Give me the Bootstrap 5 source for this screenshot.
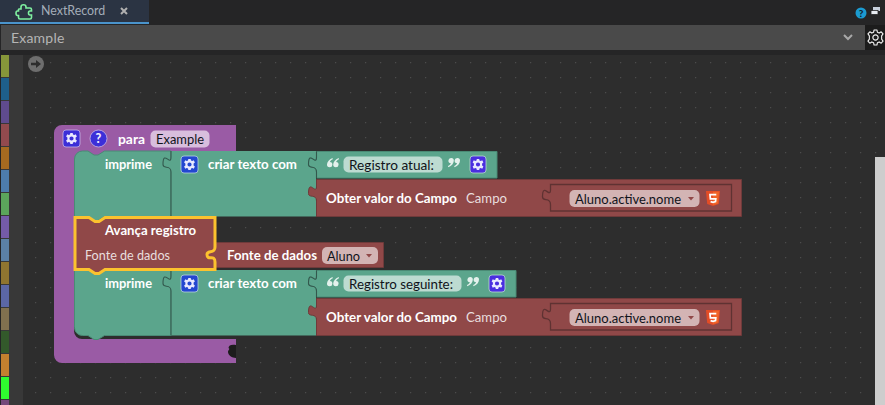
<!DOCTYPE html>
<html lang="pt">
<head>
<meta charset="utf-8">
<title>NextRecord</title>
<link href="https://cdn.jsdelivr.net/npm/bootstrap@5.3.0/dist/css/bootstrap.min.css" rel="stylesheet">
<style>
html,body{height:100%;overflow:hidden;background:#252526;font-family:"Lato","Noto Sans",sans-serif}
.shell{width:885px;height:405px}
.tabbar{height:25px;background:#252526}
.tabitem{width:149px;height:24px;background:#2b3443;border-bottom:2px solid #4a94cc;color:#a4adb8;font-size:12.4px;padding-left:15px}
.tabname{margin-left:8px;width:79px}
.selbar{height:25px;padding-left:1px}
.selfield{background:#4a4a4a;color:#b5b5b5;font-size:14px;padding:0 12px 0 10px;letter-spacing:.2px}
.selgear{width:20px;background:#1c1c1c}
.gapbar{height:5px;background:#252526}
.work{height:350px}
.swatches{width:23px;background:#383838;padding-left:1px;background-clip:content-box}
.swatchitem{width:8px;height:22px;margin-bottom:1px}
.stage{background:#2d2d2d}
.stage svg{display:block}
.thumb{position:absolute;right:0;top:102px;bottom:0;width:10px;background:#cdcdcd}
.bt{font:700 13.5px "Lato",sans-serif;fill:#fff}
.lt{font:400 13.5px "Lato",sans-serif;fill:#e8dede}
.ct{font:400 13.5px "Lato",sans-serif;fill:#10131a}
</style>
</head>
<body>
<div class="shell d-flex flex-column">
  <div class="tabbar d-flex justify-content-between">
    <div class="tabitem d-flex align-items-center">
      <svg width="18" height="17" viewBox="0 0 18 17"><path d="M4 6 H6 V4 C6 1 11 1 11 4 V5 H15 C16 5 16.500 5.500 16.500 6.500 V8 H15 C13 8 13 12 15 12 H16.500 V14.500 C16.500 15.500 16 16 15 16 H5 C4 16 3.500 15.500 3.500 14.500 V12.500 H2.500 C.5 12.500 .5 8 2.500 8 H3.500 V6.500 Z" fill="none" stroke="#7ff0a0" stroke-width="1.600"/></svg>
      <span class="tabname">NextRecord</span>
      <svg width="8" height="8" viewBox="0 0 8 8"><path d="M1 1 L7 7 M7 1 L1 7" stroke="#b0b0b0" stroke-width="2"/></svg>
    </div>
    <div class="d-flex align-items-start">
      <svg width="30" height="20" viewBox="855 0 30 20">
        <circle cx="861" cy="13" r="5.500" fill="#1b9bd1"/>
        <text x="861" y="16.500" text-anchor="middle" font-family="Lato,sans-serif" font-weight="900" font-size="10" fill="#10232e">?</text>
        <rect x="873" y="7" width="7" height="4" fill="#c8d0dc"/>
        <rect x="871" y="10.500" width="7" height="4" fill="#e8ecf2" stroke="#252526" stroke-width=".8"/>
      </svg>
    </div>
  </div>
  <div class="selbar d-flex">
    <div class="selfield flex-grow-1 d-flex align-items-center justify-content-between">
      <span>Example</span>
      <svg width="10" height="7" viewBox="0 0 10 7"><path d="M1 1 L5 5 L9 1" fill="none" stroke="#a8a8a8" stroke-width="2"/></svg>
    </div>
    <div class="selgear d-flex align-items-center justify-content-center">
      <svg width="17" height="17" viewBox="-9 -9 18 18"><path d="M-1.500 -8 H1.500 L2 -5.600 L3.900 -4.700 L6 -6 L8 -3.800 L6.500 -1.800 L6.500 1.800 L8 3.800 L6 6 L3.900 4.700 L2 5.600 L1.500 8 H-1.500 L-2 5.600 L-3.900 4.700 L-6 6 L-8 3.800 L-6.500 1.800 L-6.500 -1.800 L-8 -3.800 L-6 -6 L-3.900 -4.700 L-2 -5.600 Z" fill="none" stroke="#f2f2f2" stroke-width="1.200" stroke-linejoin="round"/><circle r="2.800" fill="none" stroke="#f2f2f2" stroke-width="1.200"/></svg>
    </div>
  </div>
  <div class="gapbar"></div>
  <div class="work d-flex position-relative">
    <div class="swatches flex-shrink-0">
      <div class="swatchitem" style="background:#87973a"></div>
      <div class="swatchitem" style="background:#1e5f8a"></div>
      <div class="swatchitem" style="background:#5f4b8e"></div>
      <div class="swatchitem" style="background:#924a4e"></div>
      <div class="swatchitem" style="background:#a56a20"></div>
      <div class="swatchitem" style="background:#4d7cac"></div>
      <div class="swatchitem" style="background:#5ba55b"></div>
      <div class="swatchitem" style="background:#745ba8"></div>
      <div class="swatchitem" style="background:#5b80a5"></div>
      <div class="swatchitem" style="background:#8f7530"></div>
      <div class="swatchitem" style="background:#5b67a5"></div>
      <div class="swatchitem" style="background:#80704f"></div>
      <div class="swatchitem" style="background:#33592b"></div>
      <div class="swatchitem" style="background:#c4802f"></div>
      <div class="swatchitem" style="background:#2ffb2f"></div>
      <div class="swatchitem" style="background:#74487a"></div>
    </div>
    <div class="stage flex-grow-1 position-relative overflow-hidden">
      <svg width="862" height="350" viewBox="23 55 862 350">
        <defs>
          <pattern id="dots" x="35" y="62" width="15" height="15" patternUnits="userSpaceOnUse"><rect width="1.200" height="1.200" fill="#4c4c4c"/></pattern>
          <g id="gearb"><path d="M-1.200 -5.500 H1.200 L1.500 -4 L2.800 -3.400 L4.200 -4.200 L5.400 -2.100 L4.100 -1.100 V1.100 L5.400 2.100 L4.200 4.200 L2.800 3.400 L1.500 4 L1.200 5.500 H-1.200 L-1.500 4 L-2.800 3.400 L-4.200 4.200 L-5.400 2.100 L-4.100 1.100 V-1.100 L-5.400 -2.100 L-4.200 -4.200 L-2.800 -3.400 L-1.500 -4 Z M0 -2.100 A2.100 2.100 0 1 0 0 2.100 A2.100 2.100 0 1 0 0 -2.100 Z" fill="#e9e9ff" fill-rule="evenodd"/></g>
          <g id="h5"><path d="M0 0 H14 L12.800 13 L7 15 L1.200 13 Z" fill="#e44d26"/><path d="M7 0.800 H13 L12 12.400 L7 14 Z" fill="#f16529"/><path d="M10.300 3.600 H4 L4.400 7.900 H9.800 L9.500 10.600 L7 11.400 L4.600 10.600" fill="none" stroke="#fff" stroke-width="1.700"/></g>
          <path id="q1" d="M5.500 0 C2 1.500 0 4 0 6.500 A2.700 2.700 0 1 0 2.900 3.900 C3.200 2.800 4.300 1.800 5.800 1.200 Z" fill="#e3f1ec"/>
          <g id="lq"><use href="#q1"/><use href="#q1" x="6.200"/></g>
          <g id="rq"><use href="#q1" transform="rotate(180 2.900 4.600) translate(-6.200 0)"/><use href="#q1" transform="rotate(180 2.900 4.600)"/></g>
        </defs>
        <rect x="23" y="55" width="862" height="350" fill="url(#dots)"/>

        <!-- run arrow -->
        <circle cx="36" cy="64" r="8" fill="#6e6e6e"/>
        <path d="M31 62.700 H36 V60 L41 64 L36 68 V65.300 H31 Z" fill="#2d2d2d"/>

        <!-- purple wrapper -->
        <path d="M62 125 H236 V151 H110 V160 H74 V331 A8 8 0 0 0 82 339 H236 V363 H62 A8 8 0 0 1 54 355 V133 A8 8 0 0 1 62 125 Z" fill="#9a5ba5"/>
        <path d="M236 345 C232 344 228.500 345 228.500 348 C230.500 349 228 350 228 352 C228 355 232 358 236 358 Z" fill="#1c1c1c"/>
        <rect x="63" y="130" width="17" height="17" rx="3" fill="#3c2fd8" stroke="#c6b5e6" stroke-width=".8"/>
        <use href="#gearb" x="71.500" y="138.500"/>
        <circle cx="98.500" cy="138.500" r="8.500" fill="#3c2fd8" stroke="#c6b5e6" stroke-width=".8"/>
        <text x="98.500" y="143" text-anchor="middle" font-family="Lato,sans-serif" font-weight="900" font-size="12.500" fill="#f0ecff">?</text>
        <text class="bt" x="118" y="144" textLength="27" lengthAdjust="spacingAndGlyphs">para</text>
        <rect x="150.500" y="130.500" width="59" height="17" rx="5" fill="#d8bedd"/>
        <text class="ct" x="156" y="144" textLength="48" lengthAdjust="spacingAndGlyphs">Example</text>

        <!-- imprime 1 -->
        <path d="M74.500 159 A8 8 0 0 1 82.500 151 H88 L94 155 H98 L104.500 151 H171 V216.500 H104.500 L98 220.500 H94 L88 216.500 H74.500 Z" fill="#5ba58c" stroke="#4a8a75" stroke-width="1"/>
        <text class="bt" x="105" y="169" textLength="47" lengthAdjust="spacingAndGlyphs">imprime</text>
        <path d="M171 151 H316 V216.500 H171 Z" fill="#5ba58c"/>
        <path d="M171 216.500 V172 c0 -7.500 -8 -2.500 -8 -7.500 c0 -15.500 8 2.500 8 -7.500 V151" fill="#5ba58c" stroke="#33584d" stroke-width="1.100"/>
        <rect x="181" y="156" width="17" height="17" rx="3" fill="#2347d0" stroke="#b6d0e0" stroke-width=".8"/>
        <use href="#gearb" x="189.500" y="164.500"/>
        <text class="bt" x="208" y="169" textLength="89" lengthAdjust="spacingAndGlyphs">criar texto com</text>

        <!-- text 1 -->
        <path d="M316.500 151.500 H497 V178 H316.500 V172 c0 -7.500 -8 -2.500 -8 -7.500 c0 -15.500 8 2.500 8 -7.500 Z" fill="#5ba58c" stroke="#4a8a75" stroke-width="1"/>
        <path d="M316.500 178 V172 c0 -7.500 -8 -2.500 -8 -7.500 c0 -15.500 8 2.500 8 -7.500 V151.500" fill="none" stroke="#33584d" stroke-width="1.100"/>
        <use href="#lq" x="327" y="158"/>
        <rect x="343.500" y="156.500" width="99" height="16" rx="5" fill="#bddbd1"/>
        <text class="ct" x="349" y="170" textLength="85" lengthAdjust="spacingAndGlyphs">Registro atual:</text>
        <use href="#rq" x="448" y="158"/>
        <rect x="470" y="156" width="16" height="17" rx="3" fill="#4a2ee0" stroke="#b8d8d0" stroke-width=".8"/>
        <use href="#gearb" x="478" y="164.500"/>

        <!-- red 1 -->
        <path d="M316.500 179.500 H741.500 V216.500 H316.500 V201 c0 -7.500 -8 -2.500 -8 -7.500 c0 -15.500 8 2.500 8 -7.500 Z" fill="#904848" stroke="#6f3a3a" stroke-width="1"/>
        <text class="bt" x="326" y="202.500" textLength="131" lengthAdjust="spacingAndGlyphs">Obter valor do Campo</text>
        <text class="lt" x="466" y="202.500" textLength="41" lengthAdjust="spacingAndGlyphs">Campo</text>
        <path d="M550.500 184.500 H731.500 V211 H550.500 V204.500 c0 -7.500 -8 -2.500 -8 -7.500 c0 -15.500 8 2.500 8 -7.500 Z" fill="#904848" stroke="#5f3232" stroke-width="1.300"/>
        <rect x="569.500" y="190" width="130" height="17" rx="5" fill="#d3b4b4"/>
        <text class="ct" x="575" y="204" textLength="106" lengthAdjust="spacingAndGlyphs">Aluno.active.nome</text>
        <path d="M688 197 H694 L691 200.500 Z" fill="#904848"/>
        <use href="#h5" x="706" y="191"/>

        <!-- imprime 2 -->
        <path d="M74.500 270 H171 V335.500 H104.500 L98 339.500 H94 L88 335.500 H82.500 A8 8 0 0 1 74.500 327.500 Z" fill="#5ba58c" stroke="#4a8a75" stroke-width="1"/>
        <text class="bt" x="105" y="288" textLength="47" lengthAdjust="spacingAndGlyphs">imprime</text>
        <path d="M171 270 H316 V335.500 H171 Z" fill="#5ba58c"/>
        <path d="M171 335.500 V291 c0 -7.500 -8 -2.500 -8 -7.500 c0 -15.500 8 2.500 8 -7.500 V270" fill="#5ba58c" stroke="#33584d" stroke-width="1.100"/>
        <rect x="181" y="275" width="17" height="17" rx="3" fill="#2347d0" stroke="#b6d0e0" stroke-width=".8"/>
        <use href="#gearb" x="189.500" y="283.500"/>
        <text class="bt" x="208" y="288" textLength="89" lengthAdjust="spacingAndGlyphs">criar texto com</text>

        <!-- text 2 -->
        <path d="M316.500 270.500 H516 V297 H316.500 V291 c0 -7.500 -8 -2.500 -8 -7.500 c0 -15.500 8 2.500 8 -7.500 Z" fill="#5ba58c" stroke="#4a8a75" stroke-width="1"/>
        <path d="M316.500 297 V291 c0 -7.500 -8 -2.500 -8 -7.500 c0 -15.500 8 2.500 8 -7.500 V270.500" fill="none" stroke="#33584d" stroke-width="1.100"/>
        <use href="#lq" x="327" y="277"/>
        <rect x="343.500" y="275.500" width="118" height="16" rx="5" fill="#bddbd1"/>
        <text class="ct" x="349" y="289" textLength="104" lengthAdjust="spacingAndGlyphs">Registro seguinte:</text>
        <use href="#rq" x="467" y="277"/>
        <rect x="489" y="275" width="16" height="17" rx="3" fill="#4a2ee0" stroke="#b8d8d0" stroke-width=".8"/>
        <use href="#gearb" x="497" y="283.500"/>

        <!-- red 2 -->
        <path d="M316.500 298.500 H741.500 V335.500 H316.500 V320 c0 -7.500 -8 -2.500 -8 -7.500 c0 -15.500 8 2.500 8 -7.500 Z" fill="#904848" stroke="#6f3a3a" stroke-width="1"/>
        <text class="bt" x="326" y="321.500" textLength="131" lengthAdjust="spacingAndGlyphs">Obter valor do Campo</text>
        <text class="lt" x="466" y="321.500" textLength="41" lengthAdjust="spacingAndGlyphs">Campo</text>
        <path d="M550.500 303.500 H731.500 V330 H550.500 V323.500 c0 -7.500 -8 -2.500 -8 -7.500 c0 -15.500 8 2.500 8 -7.500 Z" fill="#904848" stroke="#5f3232" stroke-width="1.300"/>
        <rect x="569.500" y="309" width="130" height="17" rx="5" fill="#d3b4b4"/>
        <text class="ct" x="575" y="323" textLength="106" lengthAdjust="spacingAndGlyphs">Aluno.active.nome</text>
        <path d="M688 316 H694 L691 319.500 Z" fill="#904848"/>
        <use href="#h5" x="706" y="310"/>

        <!-- Fonte de dados value -->
        <path d="M216 242.500 H383.500 V267.500 H216 Z" fill="#904848" stroke="#6f3a3a" stroke-width="1"/>
        <rect x="200" y="244" width="17" height="23" fill="#904848"/>
        <text class="bt" x="227" y="260" textLength="90" lengthAdjust="spacingAndGlyphs">Fonte de dados</text>
        <rect x="322" y="247" width="56" height="17" rx="5" fill="#d3b4b4"/>
        <text class="ct" x="327" y="260.500" textLength="33" lengthAdjust="spacingAndGlyphs">Aluno</text>
        <path d="M366 254 H372 L369 257.500 Z" fill="#904848"/>

        <!-- selected: Avança registro -->
        <path d="M75 217.500 H89 L95 221.500 H99 L105 217.500 H215 V247 c0 7.500 -8 2.500 -8 7.500 c0 7 8 -1 8 7.500 V269.500 H105 L99 273.500 H95 L89 269.500 H75 Z" fill="#904848" stroke="#fcc22e" stroke-width="3" stroke-linejoin="miter"/>
        <text class="bt" x="105" y="235" textLength="91" lengthAdjust="spacingAndGlyphs">Avança registro</text>
        <text class="lt" x="85" y="260" textLength="85" lengthAdjust="spacingAndGlyphs">Fonte de dados</text>
      </svg>
      <div class="thumb"></div>
    </div>
  </div>
</div>
<script src="https://cdn.jsdelivr.net/npm/bootstrap@5.3.0/dist/js/bootstrap.bundle.min.js"></script>
</body>
</html>
